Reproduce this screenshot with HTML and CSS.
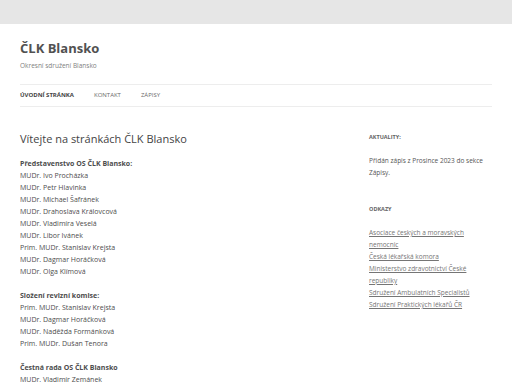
FILE: index.html
```
<!DOCTYPE html>
<html lang="cs">
<head>
    <meta charset="UTF-8">
    <meta name="viewport" content="width=device-width, initial-scale=1.0">
    <title>ČLK Blansko</title>
    <link rel="stylesheet" href="styles.css">
</head>
<body>

    <div class="site">
        <header class="site-header">
            <h1 class="site-title">ČLK Blansko</h1>
            <h2 class="site-description">Okresní sdružení Blansko</h2>
            <nav class="main-navigation">
                <ul>
                    <li class="current">Úvodní stránka</li>
                    <li>Kontakt</li>
                    <li>Zápisy</li>
                </ul>
            </nav>
        </header>

        <div class="site-content">
            <main class="primary">
                <h1 class="entry-title">Vítejte na stránkách ČLK Blansko</h1>
                <div class="entry-content">
                    <p>
                        <strong>Představenstvo OS ČLK Blansko:</strong><br>
                        MUDr. Ivo Procházka<br>
                        MUDr. Petr Hlavinka<br>
                        MUDr. Michael Šafránek<br>
                        MUDr. Drahoslava Královcová<br>
                        MUDr. Vladimíra Veselá<br>
                        MUDr. Libor Ivánek<br>
                        Prim. MUDr. Stanislav Krejsta<br>
                        MUDr. Dagmar Horáčková<br>
                        MUDr. Olga Klímová
                    </p>
                    <p>
                        <strong>Složení revizní komise:</strong><br>
                        Prim. MUDr. Stanislav Krejsta<br>
                        MUDr. Dagmar Horáčková<br>
                        MUDr. Naděžda Formánková<br>
                        Prim. MUDr. Dušan Tenora
                    </p>
                    <p>
                        <strong>Čestná rada OS ČLK Blansko</strong><br>
                        MUDr. Vladimír Zemánek
                    </p>
                </div>
            </main>

            <aside class="secondary">
                <div class="widget">
                    <h3 class="widget-title">Aktuality:</h3>
                    <p>Přidán zápis z Prosince 2023 do sekce Zápisy.</p>
                </div>
                <div class="widget">
                    <h3 class="widget-title">Odkazy</h3>
                    <ul>
                        <li><a href="#">Asociace českých a moravských nemocnic</a></li>
                        <li><a href="#">Česká lékařská komora</a></li>
                        <li><a href="#">Ministerstvo zdravotnictví České republiky</a></li>
                        <li><a href="#">Sdružení Ambulatních Specialistů</a></li>
                        <li><a href="#">Sdružení Praktických lékařů ČR</a></li>
                    </ul>
                </div>
            </aside>
        </div>
    </div>

</body>
</html>
```

FILE: styles.css
```
body {
    margin: 0;
    font-family: 'Open Sans', 'Liberation Sans', sans-serif;
    background-color: #e6e6e6;
    color: #4d4d4d;
}

.site {
    margin-top: 24px;
    padding: 0 20px;
    background-color: #fff;
    min-height: 360px;
}

.site-header {
    padding: 12px 0 0;
}

.site-title {
    margin: 0;
    font-size: 13px;
    line-height: 24px;
    font-weight: bold;
    color: #515151;
}

.site-description {
    margin: 0;
    font-size: 6.5px;
    line-height: 12px;
    font-weight: normal;
    color: #808080;
}

.main-navigation {
    margin-top: 12px;
}

.main-navigation ul {
    display: flex;
    gap: 20px;
    margin: 0;
    padding: 0;
    list-style: none;
    border-top: 1px solid #ededed;
    border-bottom: 1px solid #ededed;
}

.main-navigation li {
    font-size: 6px;
    line-height: 21px;
    text-transform: uppercase;
    color: #6a6a6a;
}

.main-navigation li.current {
    font-weight: bold;
    color: #444;
}

.site-content {
    display: flex;
    justify-content: space-between;
    margin-top: 24px;
}

.primary {
    width: 307px;
}

.entry-title {
    margin: 0 0 12px;
    font-size: 11px;
    line-height: 15px;
    font-weight: normal;
    color: #444;
}

.entry-content p {
    margin: 0 0 12px;
    font-size: 7px;
    line-height: 12px;
}

.secondary {
    width: 123px;
}

.widget {
    margin-bottom: 24px;
}

.widget-title {
    margin: 0 0 12px;
    font-size: 5.5px;
    line-height: 12px;
    font-weight: bold;
    text-transform: uppercase;
    color: #636363;
}

.widget p {
    margin: 0;
    font-size: 6.5px;
    line-height: 12px;
    color: #555;
}

.widget ul {
    margin: 0;
    padding: 0;
    list-style: none;
}

.widget li {
    font-size: 6.5px;
    line-height: 12px;
}

.widget a {
    color: #757575;
}
```
